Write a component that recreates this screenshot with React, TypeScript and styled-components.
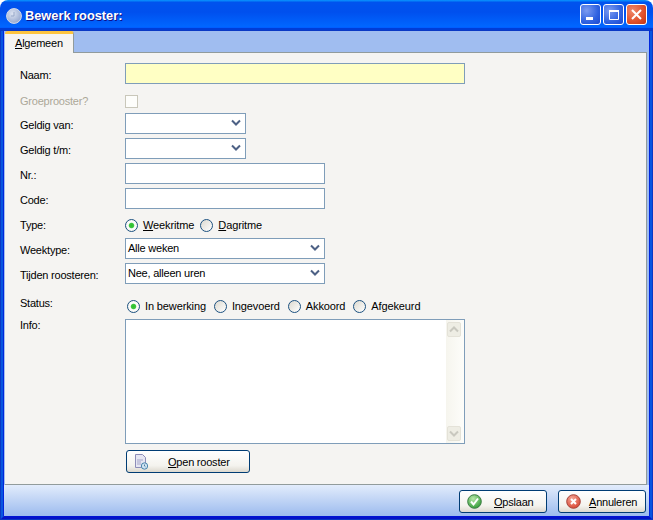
import React from "react";
import styled, { createGlobalStyle } from "styled-components";

const Global = createGlobalStyle`
  html, body { margin: 0; padding: 0; background: #fff; }
  body { font-family: "Liberation Sans", Arial, sans-serif; font-size: 11px; letter-spacing: -0.22px; color: #000; }
  * { box-sizing: border-box; }
  u { text-underline-offset: 1px; }
`;

const Win = styled.div`
  width: 653px; height: 520px; display: flex; flex-direction: column;
  border-radius: 8px 8px 0 0; overflow: hidden;
`;
const TitleBar = styled.div`
  height: 30px; flex: none; display: flex; align-items: center; padding: 2px 6px 0 6px; gap: 3px;
  background: linear-gradient(180deg, #0997ff 0, #0053ee 8%, #0050ee 40%, #0066ff 88%, #005bff 93%, #003dd7 95%, #003dd7 100%);
`;
const Title = styled.div`
  flex: 1; color: #fff; font-weight: 700; font-size: 12.8px; letter-spacing: 0; padding-bottom: 2px;
  text-shadow: 1px 1px 0 #0f1089;
`;
const Ctrls = styled.div`display: flex; gap: 2px; margin-top: -3px;`;
const Ctrl = styled.div<{ $red?: boolean }>`
  width: 21px; height: 21px; border: 1px solid #fff; border-radius: 3px;
  display: flex; align-items: center; justify-content: center;
  background: ${p => p.$red
    ? "radial-gradient(circle at 30% 30%, #f0896b, #e0502a 60%, #c23512)"
    : "radial-gradient(circle at 30% 30%, #7c9bf0, #2f62e0 60%, #1c48d0)"};
`;
const Frame = styled.div`
  flex: 1; display: flex; min-height: 0;
  border: solid #0855e0; border-width: 0 4px 4px 4px; border-bottom-color: #0412c8;
  outline: 1px solid #0a38c4; outline-offset: -1px;
`;
const Body = styled.div`
  flex: 1; display: flex; flex-direction: column; min-width: 0; background: #a0bdf0;
  box-shadow: -1px 0 0 #0026dc, 1px 0 0 #0026dc, 0 1px 0 #0014d4;
`;
const TabStrip = styled.div`height: 22px; flex: none; display: flex; align-items: flex-end; padding-left: 1px;`;
const Tab = styled.div`
  width: 69px; height: 22px; margin-bottom: -1px; position: relative; z-index: 1;
  background: #f5f4f2; border-top: 3px solid #fdc43f; border-right: 1px solid #919b9c;
  border-radius: 3px 3px 0 0; padding: 2px 0 0 10px; line-height: 14px;
`;
const Panel = styled.div`
  flex: 1; min-height: 0; margin: 0 2px 0 1px; background: #f5f4f2;
  border: solid #919b9c; border-width: 1px 1px 1px 0;
  padding: 10px 0 0 15px; display: flex; flex-direction: column; gap: 4px;
`;
const Row = styled.div<{ $h?: number; $pt?: number; $start?: boolean }>`
  display: flex; height: ${p => p.$h ?? 21}px; flex: none;
  padding-top: ${p => p.$pt ?? 0}px;
  align-items: ${p => p.$start ? "flex-start" : "center"};
`;
const Label = styled.div<{ $off?: boolean; $dy?: number }>`
  width: 105px; flex: none; color: ${p => p.$off ? "#aca899" : "#000"};
  position: relative; top: ${p => p.$dy ?? 1}px;
`;
const Field = styled.div<{ $w: number; $bg?: string }>`
  width: ${p => p.$w}px; height: 21px; border: 1px solid #7f9db9; background: ${p => p.$bg ?? "#fff"};
  display: flex; align-items: center; justify-content: space-between; padding: 0 4px 2px 2px; font-size: 11px;
`;
const Check = styled.div`width: 13px; height: 13px; border: 1px solid #c9c7ba; background: #fdfdfb;`;
const Radios = styled.div<{ $ml?: number; $gap?: number }>`
  display: flex; align-items: center; margin-left: ${p => p.$ml ?? 0}px; gap: ${p => p.$gap ?? 7}px;
  letter-spacing: -0.12px;
`;
const RadioItem = styled.div`display: flex; align-items: center; gap: 5px;`;
const Dot = styled.div<{ $on?: boolean }>`
  width: 13px; height: 13px; border-radius: 50%; border: 1px solid #1c5180;
  background: ${p => p.$on
    ? "radial-gradient(circle, #2fbf2f 0, #3cc63c 28%, #fff 42%, #ecebe3 100%)"
    : "linear-gradient(135deg, #dcd9cf, #fff)"};
`;
const Info = styled.div`
  width: 340px; height: 125px; border: 1px solid #7f9db9; background: #fff;
  display: flex; justify-content: flex-end;
`;
const Scroll = styled.div`
  width: 18px; padding: 2px 2px 2px 1px; display: flex; flex-direction: column; justify-content: space-between;
  background: linear-gradient(90deg, #f6f5ee, #fdfdfa);
`;
const ScrollBtn = styled.div`
  width: 14px; height: 15px; border: 1px solid #e4e2d8; border-radius: 2px; background: #eeede4;
  display: flex; align-items: center; justify-content: center;
`;
const ActionRow = styled.div`margin: 2px 0 0 106px;`;
const Btn = styled.div<{ $w: number }>`
  width: ${p => p.$w}px; height: 23px; border: 1px solid #003c74; border-radius: 3px;
  background: linear-gradient(180deg, #fff 0, #f4f3ee 70%, #dcd8ce 100%);
  display: flex; align-items: center; position: relative; padding-left: 7px; font-size: 11px;
`;
const BtnText = styled.span<{ $ml: number }>`margin-left: ${p => p.$ml}px;`;
const Footer = styled.div`
  height: 31px; flex: none; padding: 5px 3px 0 0; display: flex; justify-content: flex-end; gap: 11px;
  background: linear-gradient(180deg, #e2ecfc, #9cbbee);
`;

const Chev = () => (
  <svg width="10" height="7" viewBox="0 0 10 7"><path d="M1 1.5l4 4 4-4" fill="none" stroke="#4d6185" strokeWidth="2" /></svg>
);
const Up = () => (
  <svg width="10" height="7" viewBox="0 0 10 7"><path d="M1 5.5l4-4 4 4" fill="none" stroke="#c9c8bf" strokeWidth="2" /></svg>
);
const Down = () => (
  <svg width="10" height="7" viewBox="0 0 10 7"><path d="M1 1.5l4 4 4-4" fill="none" stroke="#c9c8bf" strokeWidth="2" /></svg>
);
const ClockIcon = () => (
  <svg width="16" height="16" viewBox="0 0 16 16">
    <defs><radialGradient id="cg" cx="40%" cy="35%" r="75%"><stop offset="0" stopColor="#dde4f2" /><stop offset="1" stopColor="#8da0c8" /></radialGradient></defs>
    <circle cx="8" cy="8" r="7.4" fill="url(#cg)" stroke="#d5dcec" strokeWidth="1" />
    <path d="M8 4v4H5" fill="none" stroke="#98a8c8" strokeWidth="1" />
  </svg>
);
const Doc = () => (
  <svg width="14" height="16" viewBox="0 0 14 16">
    <path d="M1.5.5h7l3 3v10h-10z" fill="#e6e6f2" stroke="#8d8db8" />
    <path d="M3 6h6M3 8h4M3 10h4" stroke="#a5a5c8" />
    <circle cx="10.5" cy="12" r="3.2" fill="#cfe3f2" stroke="#4c86ad" />
    <path d="M10.5 10.5V12l1 .8" fill="none" stroke="#35688c" strokeWidth=".8" />
  </svg>
);
const OkIcon = () => (
  <svg width="15" height="15" viewBox="0 0 15 15">
    <defs><radialGradient id="og" cx="40%" cy="30%" r="75%"><stop offset="0" stopColor="#b8e8a8" /><stop offset="1" stopColor="#2f9a35" /></radialGradient></defs>
    <circle cx="7.5" cy="7.5" r="6.8" fill="url(#og)" stroke="#3b7c42" />
    <path d="M4 7.5l2.5 3L11 4.5" fill="none" stroke="#fff" strokeWidth="2" />
  </svg>
);
const CancelIcon = () => (
  <svg width="15" height="15" viewBox="0 0 15 15">
    <defs><radialGradient id="rg" cx="40%" cy="30%" r="75%"><stop offset="0" stopColor="#f4a898" /><stop offset="1" stopColor="#d8432f" /></radialGradient></defs>
    <circle cx="7.5" cy="7.5" r="6.8" fill="url(#rg)" stroke="#a5453b" />
    <path d="M5 5l5 5M10 5l-5 5" fill="none" stroke="#fff" strokeWidth="2" />
  </svg>
);

const Radio = ({ on, children }: { on?: boolean; children: React.ReactNode }) => (
  <RadioItem><Dot $on={on} /><span>{children}</span></RadioItem>
);

export default function App() {
  return (
    <Win>
      <Global />
      <TitleBar>
        <ClockIcon />
        <Title>Bewerk rooster:</Title>
        <Ctrls>
          <Ctrl><svg width="13" height="13" viewBox="0 0 13 13"><rect x="2" y="9" width="7" height="3" fill="#fff" /></svg></Ctrl>
          <Ctrl><svg width="13" height="13" viewBox="0 0 13 13"><path d="M2.5 3.5h9v8h-9z" fill="none" stroke="#fff" /><rect x="2" y="2" width="10" height="2" fill="#fff" /></svg></Ctrl>
          <Ctrl $red><svg width="13" height="13" viewBox="0 0 13 13"><path d="M2 2l9 9M11 2l-9 9" stroke="#fff" strokeWidth="2" /></svg></Ctrl>
        </Ctrls>
      </TitleBar>
      <Frame>
        <Body>
          <TabStrip><Tab><u>A</u>lgemeen</Tab></TabStrip>
          <Panel>
            <Row><Label>Naam:</Label><Field $w={340} $bg="#ffffc4" /></Row>
            <Row $pt={6}><Label $off $dy={-1}>Groeprooster?</Label><Check /></Row>
            <Row><Label>Geldig van:</Label><Field $w={121}><span /><Chev /></Field></Row>
            <Row><Label>Geldig t/m:</Label><Field $w={121}><span /><Chev /></Field></Row>
            <Row><Label>Nr.:</Label><Field $w={200} /></Row>
            <Row><Label>Code:</Label><Field $w={200} /></Row>
            <Row $pt={3}>
              <Label $dy={0}>Type:</Label>
              <Radios $gap={6}>
                <Radio on><u>W</u>eekritme</Radio>
                <Radio><u>D</u>agritme</Radio>
              </Radios>
            </Row>
            <Row><Label>Weektype:</Label><Field $w={200}><span>Alle weken</span><Chev /></Field></Row>
            <Row><Label>Tijden roosteren:</Label><Field $w={200}><span>Nee, alleen uren</span><Chev /></Field></Row>
            <Row $h={27} $pt={9}>
              <Label $dy={-3}>Status:</Label>
              <Radios $ml={2} $gap={8}>
                <Radio on>In bewerking</Radio>
                <Radio>Ingevoerd</Radio>
                <Radio>Akkoord</Radio>
                <Radio>Afgekeurd</Radio>
              </Radios>
            </Row>
            <Row $h={125} $start>
              <Label $dy={0}>Info:</Label>
              <Info>
                <Scroll>
                  <ScrollBtn><Up /></ScrollBtn>
                  <ScrollBtn><Down /></ScrollBtn>
                </Scroll>
              </Info>
            </Row>
            <ActionRow>
              <Btn $w={124}><Doc /><BtnText $ml={20}><u>O</u>pen rooster</BtnText></Btn>
            </ActionRow>
          </Panel>
          <Footer>
            <Btn $w={88}><OkIcon /><BtnText $ml={12}><u>O</u>pslaan</BtnText></Btn>
            <Btn $w={88}><CancelIcon /><BtnText $ml={8}><u>A</u>nnuleren</BtnText></Btn>
          </Footer>
        </Body>
      </Frame>
    </Win>
  );
}
